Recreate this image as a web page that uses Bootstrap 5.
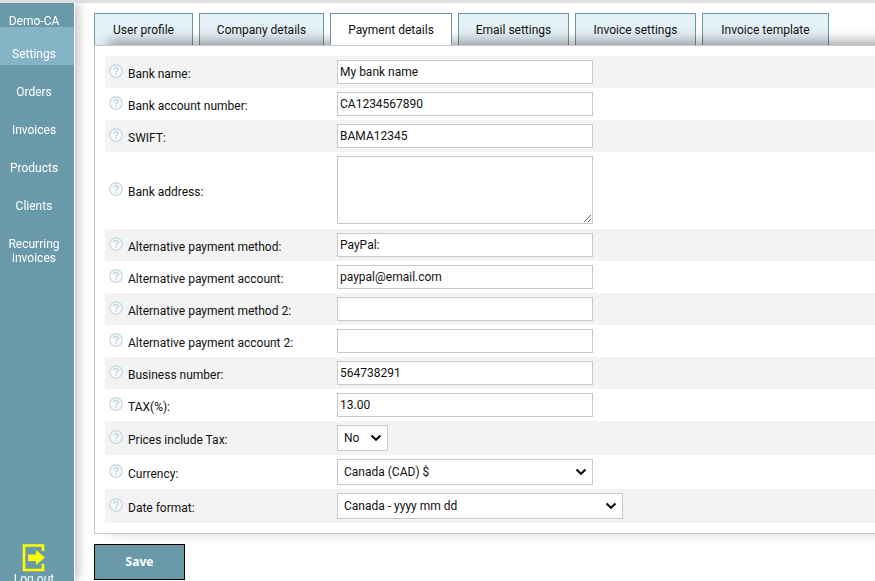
<!DOCTYPE html>
<html lang="en">
<head>
<meta charset="utf-8">
<meta name="viewport" content="width=device-width, initial-scale=1">
<title>Payment details</title>
<link rel="stylesheet" href="https://cdn.jsdelivr.net/npm/bootstrap@5.3.0/dist/css/bootstrap.min.css">
<style>
:root { --teal: #6a9aaa; --line: #c8c9cb; }
body { font: 12px/14px Tahoma, Roboto, "Noto Sans", sans-serif; color: #111; border-top: 3px solid #dbdfe0; }
.sidebar { width: 74px; height: calc(100vh - 3px); background: var(--teal); box-shadow: 1px 0 0 #fff, 4px 0 10px rgba(0,0,0,.26); }
.sidebar a { color: #fff; text-decoration: none; text-align: center; }
.side-item { display: block; padding: 20px 10px 4px 4px; }
.side-item.current { background: #84b4c5; }
.side-brand { padding: 11px 10px 0 4px; height: 24px; }
.logout { margin-bottom: -5px; padding-right: 6px; }
.content { padding: 10px 0 0 20px; }
.tabs { gap: 6px; }
.tabs a { flex: none; height: 32px; padding: 9px 0 0; border: 1px solid #6c98a5; border-bottom: 0; background: #e4f1f6; color: #111; text-align: center; text-decoration: none; }
.tabs a.current { background: #fff; z-index: 2; position: relative; }
.t1 { width: 99px; } .t2 { width: 125px; } .t3 { width: 122px; } .t4 { width: 111px; } .t5 { width: 121px; } .t6 { width: 127px; }
.panel { border: 1px solid var(--line); border-right: 0; background: #fff; padding: 10px 0 10px 10px; box-shadow: 14px -4px 12px rgba(0,0,0,.36); }
.field-row { min-height: 32px; padding: 4px 0 4px 4px; }
.field-row:nth-child(odd) { background: #f3f3f3; }
.field-row.tall { padding-bottom: 5px; }
.field-row label { width: 209px; padding-top: 4px; }
.help { width: 14px; height: 14px; margin: 0 5px 2px 0; flex: none; }
.box { border: 1px solid var(--line); border-radius: 0; background-color: #fff; color: #111; height: 24px; width: 256px; padding: 0 2px; outline-color: var(--teal); }
textarea.box { height: 68px; display: block; }
select.box { height: 26px; padding: 0 24px 0 6px; appearance: none; }
.pick { display: grid; }
.pick > * { grid-area: 1 / 1; }
.pick svg { justify-self: end; align-self: center; margin-right: 6px; pointer-events: none; }
select.box.w-short { width: 51px; }
select.box.w-long { width: 286px; }
.save { width: 91px; height: 36px; margin-top: 10px; border: 1px solid #000; background: var(--teal); color: #fff; font: 700 12px/14px "Noto Sans", sans-serif; }
</style>
<script src="https://cdn.jsdelivr.net/npm/bootstrap@5.3.0/dist/js/bootstrap.bundle.min.js"></script>
</head>
<body class="overflow-x-hidden">
<svg class="d-none" aria-hidden="true">
<symbol id="q" viewBox="0 0 14 14"><circle cx="7" cy="7" r="6.2" fill="#f7fafb" stroke="#c9dce5" stroke-width="1.4"/><path d="M4.9 5.4Q5 3.6 7 3.6T9.1 5.4Q9.1 6.3 8 6.9Q7 7.4 7 8.5M7 9.6V11" fill="none" stroke="#c5d8e2" stroke-width="1.5"/></symbol>
<symbol id="v" viewBox="0 0 12 8"><path d="M1.5 1.5L6 5.7L10.5 1.5" fill="none" stroke="#111" stroke-width="2.2"/></symbol>
</svg>
<div class="d-flex">
<nav class="sidebar d-flex flex-column flex-shrink-0 sticky-top">
<a class="side-brand" href="#">Demo-CA</a>
<a class="side-item current" href="#">Settings</a>
<a class="side-item" href="#">Orders</a>
<a class="side-item" href="#">Invoices</a>
<a class="side-item" href="#">Products</a>
<a class="side-item" href="#">Clients</a>
<a class="side-item" href="#">Recurring invoices</a>
<a class="logout mt-auto d-flex flex-column align-items-center" href="#">
<svg width="24" height="28" viewBox="0 0 24 28" aria-hidden="true"><path d="M21 7V1.5H2V26H21V20" fill="none" stroke="#ff0" stroke-width="2.6"/><path d="M6 10.5H14V6L23 13.5L14 21V17H6Z" fill="#ff0"/></svg>
<span>Log out</span></a>
</nav>
<main class="content flex-grow-1">
<nav class="tabs d-flex">
<a class="t1" href="#">User profile</a>
<a class="t2" href="#">Company details</a>
<a class="t3 current" href="#" aria-current="page">Payment details</a>
<a class="t4" href="#">Email settings</a>
<a class="t5" href="#">Invoice settings</a>
<a class="t6" href="#">Invoice template</a>
</nav>
<form>
<div class="panel position-relative z-1">
<div class="field-row d-flex align-items-center"><svg class="help"><use href="#q"/></svg><label for="f1">Bank name:</label><input class="box" id="f1" value="My bank name"></div>
<div class="field-row d-flex align-items-center"><svg class="help"><use href="#q"/></svg><label for="f2">Bank account number:</label><input class="box" id="f2" value="CA1234567890"></div>
<div class="field-row d-flex align-items-center"><svg class="help"><use href="#q"/></svg><label for="f3">SWIFT:</label><input class="box" id="f3" value="BAMA12345"></div>
<div class="field-row tall d-flex align-items-center"><svg class="help"><use href="#q"/></svg><label for="f4">Bank address:</label><textarea class="box" id="f4"></textarea></div>
<div class="field-row d-flex align-items-center"><svg class="help"><use href="#q"/></svg><label for="f5">Alternative payment method:</label><input class="box" id="f5" value="PayPal:"></div>
<div class="field-row d-flex align-items-center"><svg class="help"><use href="#q"/></svg><label for="f6">Alternative payment account:</label><input class="box" id="f6" value="paypal@email.com"></div>
<div class="field-row d-flex align-items-center"><svg class="help"><use href="#q"/></svg><label for="f7">Alternative payment method 2:</label><input class="box" id="f7"></div>
<div class="field-row d-flex align-items-center"><svg class="help"><use href="#q"/></svg><label for="f8">Alternative payment account 2:</label><input class="box" id="f8"></div>
<div class="field-row d-flex align-items-center"><svg class="help"><use href="#q"/></svg><label for="f9">Business number:</label><input class="box" id="f9" value="564738291"></div>
<div class="field-row d-flex align-items-center"><svg class="help"><use href="#q"/></svg><label for="f10">TAX(%):</label><input class="box" id="f10" value="13.00"></div>
<div class="field-row d-flex align-items-center"><svg class="help"><use href="#q"/></svg><label for="f11">Prices include Tax:</label><div class="pick"><select class="box w-short" id="f11"><option>No</option><option>Yes</option></select><svg width="12" height="8"><use href="#v"/></svg></div></div>
<div class="field-row d-flex align-items-center"><svg class="help"><use href="#q"/></svg><label for="f12">Currency:</label><div class="pick"><select class="box" id="f12"><option>Canada (CAD) $</option></select><svg width="12" height="8"><use href="#v"/></svg></div></div>
<div class="field-row d-flex align-items-center"><svg class="help"><use href="#q"/></svg><label for="f13">Date format:</label><div class="pick"><select class="box w-long" id="f13"><option>Canada - yyyy mm dd</option></select><svg width="12" height="8"><use href="#v"/></svg></div></div>
</div>
<button class="save" type="submit">Save</button>
</form>
</main>
</div>
</body>
</html>
